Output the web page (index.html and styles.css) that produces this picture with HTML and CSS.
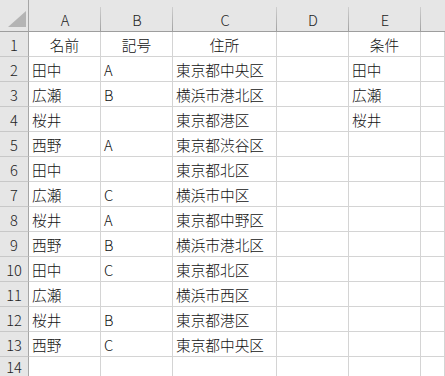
FILE: index.html
```html
<!DOCTYPE html>
<html lang="ja">
<head>
<meta charset="utf-8">
<link rel="stylesheet" href="styles.css">
</head>
<body>
<div class="sheet">
  <div class="corner"><div class="tri"></div></div>
  <div class="ch">A</div><div class="ch">B</div><div class="ch">C</div><div class="ch">D</div><div class="ch">E</div><div class="ch last"></div>

  <div class="rh">1</div><div class="c ctr">名前</div><div class="c ctr">記号</div><div class="c ctr">住所</div><div class="c"></div><div class="c ctr">条件</div><div class="c"></div>
  <div class="rh">2</div><div class="c">田中</div><div class="c">A</div><div class="c">東京都中央区</div><div class="c"></div><div class="c">田中</div><div class="c"></div>
  <div class="rh">3</div><div class="c">広瀬</div><div class="c">B</div><div class="c">横浜市港北区</div><div class="c"></div><div class="c">広瀬</div><div class="c"></div>
  <div class="rh">4</div><div class="c">桜井</div><div class="c"></div><div class="c">東京都港区</div><div class="c"></div><div class="c">桜井</div><div class="c"></div>
  <div class="rh">5</div><div class="c">西野</div><div class="c">A</div><div class="c">東京都渋谷区</div><div class="c"></div><div class="c"></div><div class="c"></div>
  <div class="rh">6</div><div class="c">田中</div><div class="c"></div><div class="c">東京都北区</div><div class="c"></div><div class="c"></div><div class="c"></div>
  <div class="rh">7</div><div class="c">広瀬</div><div class="c">C</div><div class="c">横浜市中区</div><div class="c"></div><div class="c"></div><div class="c"></div>
  <div class="rh">8</div><div class="c">桜井</div><div class="c">A</div><div class="c">東京都中野区</div><div class="c"></div><div class="c"></div><div class="c"></div>
  <div class="rh">9</div><div class="c">西野</div><div class="c">B</div><div class="c">横浜市港北区</div><div class="c"></div><div class="c"></div><div class="c"></div>
  <div class="rh">10</div><div class="c">田中</div><div class="c">C</div><div class="c">東京都北区</div><div class="c"></div><div class="c"></div><div class="c"></div>
  <div class="rh">11</div><div class="c">広瀬</div><div class="c"></div><div class="c">横浜市西区</div><div class="c"></div><div class="c"></div><div class="c"></div>
  <div class="rh">12</div><div class="c">桜井</div><div class="c">B</div><div class="c">東京都港区</div><div class="c"></div><div class="c"></div><div class="c"></div>
  <div class="rh">13</div><div class="c">西野</div><div class="c">C</div><div class="c">東京都中央区</div><div class="c"></div><div class="c"></div><div class="c"></div>
  <div class="rh tail">14</div><div class="c tail"></div><div class="c tail"></div><div class="c tail"></div><div class="c tail"></div><div class="c tail"></div><div class="c tail"></div>
</div>
</body>
</html>
```

FILE: styles.css
```css
html, body {
  margin: 0;
  padding: 0;
  background: #ffffff;
  overflow: hidden;
}
.sheet {
  display: grid;
  grid-template-columns: 29px 72px 72px 104px 72px 72px 1fr;
  grid-template-rows: 32px repeat(13, 25px) 19px;
  width: 445px;
  font-family: "Noto Sans CJK JP", "Noto Sans", sans-serif;
  font-weight: 300;
  font-size: 14.67px;
  color: #111111;
}
.sheet > div {
  box-sizing: border-box;
  overflow: hidden;
  white-space: nowrap;
}
.corner {
  background: #e6e6e6;
  border-right: 1px solid #a6a6a6;
  border-bottom: 1px solid #9e9e9e;
  display: flex;
  align-items: flex-end;
  justify-content: flex-end;
  padding: 0 2px 4px 0;
}
.tri {
  width: 18px;
  height: 16px;
  background: #b4b4b4;
  clip-path: polygon(100% 0, 100% 100%, 0 100%);
}
.ch {
  background-color: #e6e6e6;
  background-image: linear-gradient(#cfcfcf, #a2a2a2);
  background-size: 1px 24px;
  background-position: right bottom;
  background-repeat: no-repeat;
  border-bottom: 1px solid #9e9e9e;
  padding-top: 7px;
  display: flex;
  align-items: center;
  justify-content: center;
  color: #222222;
}
.ch.last {
  background-image: none;
}
.rh {
  background: #e6e6e6;
  border-right: 1px solid #a6a6a6;
  border-bottom: 1px solid #c8c8c8;
  display: flex;
  align-items: center;
  justify-content: center;
  color: #222222;
}
.c {
  border-right: 1px solid #d4d4d4;
  border-bottom: 1px solid #d4d4d4;
  display: flex;
  align-items: center;
  padding-left: 3px;
}
.c.ctr {
  justify-content: center;
  padding-left: 0;
}
.tail {
  border-bottom: none;
}
.rh.tail {
  align-items: flex-start;
  padding-top: 3px;
  line-height: 14px;
}
```
